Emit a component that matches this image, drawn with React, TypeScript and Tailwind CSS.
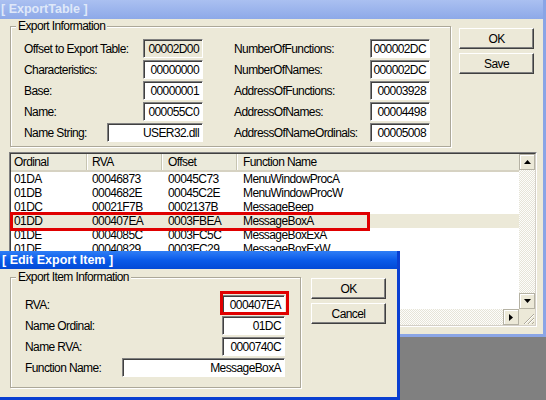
import React from "react";

const exportRows = [
  { ord: "01DA", rva: "00046873", off: "00045C73", name: "MenuWindowProcA" },
  { ord: "01DB", rva: "0004682E", off: "00045C2E", name: "MenuWindowProcW" },
  { ord: "01DC", rva: "00021F7B", off: "0002137B", name: "MessageBeep" },
  { ord: "01DD", rva: "000407EA", off: "0003FBEA", name: "MessageBoxA", sel: true },
  { ord: "01DE", rva: "0004085C", off: "0003FC5C", name: "MessageBoxExA" },
  { ord: "01DF", rva: "00040829", off: "0003FC29", name: "MessageBoxExW" },
];

const leftFields = [
  { label: "Offset to Export Table:", value: "00002D00", readOnly: true },
  { label: "Characteristics:", value: "00000000" },
  { label: "Base:", value: "00000001" },
  { label: "Name:", value: "000055C0" },
  { label: "Name String:", value: "USER32.dll", wide: true },
];

const rightFields = [
  { label: "NumberOfFunctions:", value: "000002DC" },
  { label: "NumberOfNames:", value: "000002DC" },
  { label: "AddressOfFunctions:", value: "00003928" },
  { label: "AddressOfNames:", value: "00004498" },
  { label: "AddressOfNameOrdinals:", value: "00005008" },
];

const itemFields = [
  { label: "RVA:", value: "000407EA" },
  { label: "Name Ordinal:", value: "01DC" },
  { label: "Name RVA:", value: "0000740C" },
  { label: "Function Name:", value: "MessageBoxA", wide: true },
];

const TextBox = ({
  value,
  className,
  readOnly,
}: {
  value: string;
  className: string;
  readOnly?: boolean;
}) => (
  <div
    className={`${className} h-[19px] ${
      readOnly ? "bg-[#ece9d8]" : "bg-white"
    } border border-t-[#808080] border-l-[#808080] border-r-white border-b-white shadow-[inset_1px_1px_0_#404040] flex items-center justify-end pr-[3px] leading-none`}
  >
    {value}
  </div>
);

const Button = ({ label }: { label: string }) => (
  <div className="w-[75px] h-[21px] bg-[#ece9d8] border border-t-white border-l-white border-b-[#404040] border-r-[#404040] shadow-[inset_-1px_-1px_0_#808080] flex items-center justify-center">
    {label}
  </div>
);

const GroupBox = ({
  title,
  className,
  children,
}: {
  title: string;
  className: string;
  children: React.ReactNode;
}) => (
  <div
    className={`relative border border-[#aca899] shadow-[inset_1px_1px_0_#fff,1px_1px_0_#fff] ${className}`}
  >
    <span className="absolute -top-[8px] left-[5px] px-[2px] bg-[#ece9d8] leading-[14px]">
      {title}
    </span>
    {children}
  </div>
);

const Arrow = ({ dir }: { dir: "up" | "down" | "right" }) => {
  const pts =
    dir === "up" ? "0,4 7,4 3.5,0" : dir === "down" ? "0,0 7,0 3.5,4" : "0,0 0,7 4,3.5";
  const size = dir === "right" ? { w: 4, h: 7 } : { w: 7, h: 4 };
  return (
    <svg width={size.w} height={size.h} viewBox={`0 0 ${size.w} ${size.h}`}>
      <polygon points={pts} fill="#000" />
    </svg>
  );
};

const ScrollButton = ({ dir }: { dir: "up" | "down" | "right" }) => (
  <div className="w-[16px] h-[16px] bg-[#ece9d8] border border-[#b5b2a4] shadow-[inset_1px_1px_0_#fff] flex items-center justify-center">
    <Arrow dir={dir} />
  </div>
);

const track =
  "bg-[repeating-conic-gradient(#fdfdfb_0_25%,#e6e4d8_0_50%)] bg-[length:2px_2px]";

const ListView = () => (
  <div className="ml-[9px] mt-[5px] w-[528px] h-[175px] border border-t-[#808080] border-l-[#808080] border-r-white border-b-white">
    <div className="w-full h-full border border-t-[#404040] border-l-[#404040] border-r-[#d4d0c8] border-b-[#d4d0c8] bg-white grid grid-cols-[1fr_16px] grid-rows-[1fr_16px]">
      <div className="overflow-hidden">
        <div className="flex h-[18px] bg-[#ebeadb] border-b-2 border-[#d6d2c2]">
          <div className="w-[76px] pl-[3px] leading-[16px] border-r border-[#c7c5b2]">Ordinal</div>
          <div className="w-[75px] pl-[5px] leading-[16px] border-r border-[#c7c5b2] shadow-[inset_1px_0_0_#fff]">RVA</div>
          <div className="w-[75px] pl-[6px] leading-[16px] border-r border-[#c7c5b2] shadow-[inset_1px_0_0_#fff]">Offset</div>
          <div className="flex-1 pl-[6px] leading-[16px] shadow-[inset_1px_0_0_#fff]">Function Name</div>
        </div>
        {exportRows.map((r) => (
          <div
            key={r.ord}
            className={`flex h-[14px] leading-[14px] ${r.sel ? "bg-[#ece9d8]" : ""}`}
          >
            <div className="w-[76px] pl-[3px]">{r.ord}</div>
            <div className="w-[75px] pl-[5px]">{r.rva}</div>
            <div className="w-[75px] pl-[6px]">{r.off}</div>
            <div className="flex-1 pl-[6px]">{r.name}</div>
          </div>
        ))}
      </div>
      <div className="flex flex-col">
        <ScrollButton dir="up" />
        <div className={`flex-1 ${track}`} />
        <ScrollButton dir="down" />
      </div>
      <div className="flex">
        <div className={`flex-1 ${track}`} />
        <ScrollButton dir="right" />
      </div>
      <div className="bg-[#ece9d8] flex items-end justify-end">
        <svg width="12" height="12" viewBox="0 0 12 12">
          <g strokeWidth="1">
            <line x1="11" y1="1" x2="1" y2="11" stroke="#aca899" />
            <line x1="11" y1="2" x2="2" y2="11" stroke="#fff" />
            <line x1="11" y1="5" x2="5" y2="11" stroke="#aca899" />
            <line x1="11" y1="6" x2="6" y2="11" stroke="#fff" />
            <line x1="11" y1="9" x2="9" y2="11" stroke="#aca899" />
          </g>
        </svg>
      </div>
    </div>
  </div>
);

export default function App() {
  return (
    <div className="relative w-[546px] h-[400px] overflow-hidden bg-[#808080] font-['Liberation_Sans',Arial,sans-serif] text-[12px] tracking-[-0.6px] text-black">
      {/* Export table window (inactive) */}
      <div className="w-[546px] h-[337px] bg-[#ece9d8] border-r-[3px] border-b-[3px] border-[#8aa5e6] flex flex-col">
        <div className="h-[19px] bg-gradient-to-b from-[#aac0f1] to-[#8ea9e8] text-[#dfe8f9] font-bold text-[12.5px] tracking-normal leading-[19px] pl-px">
          [ ExportTable ]
        </div>
        <div className="flex pl-[10px] pt-[7px] gap-[8px]">
          <GroupBox title="Export Information" className="w-[441px] h-[121px] pt-[12px] pl-[13px]">
            <div className="flex flex-col gap-[2px]">
              {leftFields.map((f, i) => (
                <div key={f.label} className="flex items-center h-[19px]">
                  <div className="w-[179px] flex items-center justify-between">
                    <span>{f.label}</span>
                    <TextBox
                      value={f.value}
                      readOnly={f.readOnly}
                      className={f.wide ? "w-[96px]" : "w-[60px]"}
                    />
                  </div>
                  <div className="ml-[31px] w-[196px] flex items-center justify-between">
                    <span>{rightFields[i].label}</span>
                    <TextBox value={rightFields[i].value} className="w-[60px]" />
                  </div>
                </div>
              ))}
            </div>
          </GroupBox>
          <div className="flex flex-col gap-[4px] pt-[2px]">
            <Button label="OK" />
            <Button label="Save" />
          </div>
        </div>
        <ListView />
      </div>

      {/* highlight annotation on list */}
      <div className="absolute left-[10px] top-[212px] w-[360px] h-[19px] border-[3px] border-[#e00000]" />

      {/* Edit export item dialog (active) */}
      <div className="absolute left-0 top-[251px] w-[400px] h-[149px] bg-[#ece9d8] border-r-[3px] border-b-[3px] border-[#0a3fd1] flex flex-col">
        <div className="h-[18px] bg-gradient-to-b from-[#2f7ef6] via-[#0a5be9] to-[#0349d6] text-white font-bold text-[12.5px] tracking-normal leading-[18px] pl-[2px]">
          [ Edit Export Item ]
        </div>
        <div className="flex pl-[10px] pt-[8px] gap-[10px]">
          <GroupBox title="Export Item Information" className="w-[291px] h-[111px] pt-[17px] pl-[14px]">
            <div className="flex flex-col gap-[2px]">
              {itemFields.map((f) => (
                <div key={f.label} className="w-[260px] h-[19px] flex items-center justify-between">
                  <span>{f.label}</span>
                  <TextBox value={f.value} className={f.wide ? "w-[163px]" : "w-[63px]"} />
                </div>
              ))}
            </div>
          </GroupBox>
          <div className="flex flex-col gap-[4px] pt-px">
            <Button label="OK" />
            <Button label="Cancel" />
          </div>
        </div>
      </div>

      {/* highlight annotation on RVA */}
      <div className="absolute left-[220px] top-[291px] w-[69px] h-[24px] border-[3px] border-[#e00000]" />
    </div>
  );
}
